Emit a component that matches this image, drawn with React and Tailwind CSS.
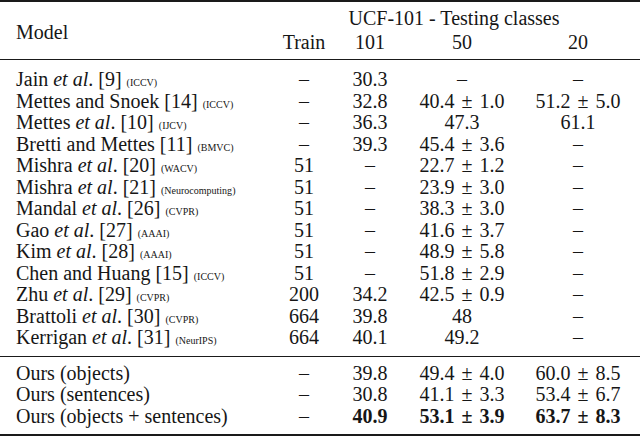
import React from "react";

const DASH = "–";

const baselines = [
  { author: "Jain", etal: true, ref: 9, venue: "ICCV", train: DASH, c101: "30.3", c50: DASH, c20: DASH },
  { author: "Mettes and Snoek", ref: 14, venue: "ICCV", train: DASH, c101: "32.8", c50: "40.4 ± 1.0", c20: "51.2 ± 5.0" },
  { author: "Mettes", etal: true, ref: 10, venue: "IJCV", train: DASH, c101: "36.3", c50: "47.3", c20: "61.1" },
  { author: "Bretti and Mettes", ref: 11, venue: "BMVC", train: DASH, c101: "39.3", c50: "45.4 ± 3.6", c20: DASH },
  { author: "Mishra", etal: true, ref: 20, venue: "WACV", train: "51", c101: DASH, c50: "22.7 ± 1.2", c20: DASH },
  { author: "Mishra", etal: true, ref: 21, venue: "Neurocomputing", train: "51", c101: DASH, c50: "23.9 ± 3.0", c20: DASH },
  { author: "Mandal", etal: true, ref: 26, venue: "CVPR", train: "51", c101: DASH, c50: "38.3 ± 3.0", c20: DASH },
  { author: "Gao", etal: true, ref: 27, venue: "AAAI", train: "51", c101: DASH, c50: "41.6 ± 3.7", c20: DASH },
  { author: "Kim", etal: true, ref: 28, venue: "AAAI", train: "51", c101: DASH, c50: "48.9 ± 5.8", c20: DASH },
  { author: "Chen and Huang", ref: 15, venue: "ICCV", train: "51", c101: DASH, c50: "51.8 ± 2.9", c20: DASH },
  { author: "Zhu", etal: true, ref: 29, venue: "CVPR", train: "200", c101: "34.2", c50: "42.5 ± 0.9", c20: DASH },
  { author: "Brattoli", etal: true, ref: 30, venue: "CVPR", train: "664", c101: "39.8", c50: "48", c20: DASH },
  { author: "Kerrigan", etal: true, ref: 31, venue: "NeurIPS", train: "664", c101: "40.1", c50: "49.2", c20: DASH },
];

const ours = [
  { name: "Ours (objects)", train: DASH, c101: "39.8", c50: "49.4 ± 4.0", c20: "60.0 ± 8.5" },
  { name: "Ours (sentences)", train: DASH, c101: "30.8", c50: "41.1 ± 3.3", c20: "53.4 ± 6.7" },
  { name: "Ours (objects + sentences)", train: DASH, c101: "40.9", c50: "53.1 ± 3.9", c20: "63.7 ± 8.3", best: true },
];

const ModelName = ({ row }) => (
  <>
    {row.author}
    {row.etal && (
      <>
        {" "}
        <i>et al</i>.
      </>
    )}{" "}
    [{row.ref}] <span className="text-[10px] leading-[0]">({row.venue})</span>
  </>
);

// mean ± std, with a little extra room round the sign as in the paper
const Value = ({ v }) => {
  const [mean, std] = v.split(" ± ");
  if (!std) return v;
  return (
    <>
      {mean} <span className="mx-[2px]">±</span> {std}
    </>
  );
};

const NumCells = ({ row }) => (
  <>
    <td className="text-center">{row.train}</td>
    <td className={`text-center ${row.best ? "font-bold" : ""}`}>
      <Value v={row.c101} />
    </td>
    <td className={`text-center ${row.best ? "font-bold" : ""}`}>
      <Value v={row.c50} />
    </td>
    <td className={`text-center ${row.best ? "font-bold" : ""}`}>
      <Value v={row.c20} />
    </td>
  </>
);

export default function App() {
  return (
    <div className="w-[640px] h-[437px] overflow-hidden bg-white text-[#161616] text-[20px] leading-[21.5px] font-['Liberation_Serif','Times_New_Roman',serif]">
      <table className="w-[640px] table-fixed border-collapse">
        <colgroup>
          <col className="w-[276px]" />
          <col className="w-[56px]" />
          <col className="w-[76px]" />
          <col className="w-[108px]" />
          <col className="w-[124px]" />
        </colgroup>
        <thead>
          <tr className="border-t-2 border-[#1a1a1a]">
            <th rowSpan={2} className="pl-4 text-left font-normal align-middle pt-[4px]">
              Model
            </th>
            <th colSpan={4} className="font-normal text-center pt-[6px] pr-[8px]">
              UCF-101 - Testing classes
            </th>
          </tr>
          <tr className="border-b border-[#1a1a1a]">
            <th className="font-normal text-center pt-[2px] pb-[6px]">Train</th>
            <th className="font-normal text-center pt-[2px] pb-[6px]">101</th>
            <th className="font-normal text-center pt-[2px] pb-[6px]">50</th>
            <th className="font-normal text-center pt-[2px] pb-[6px]">20</th>
          </tr>
        </thead>
        <tbody className="border-b border-[#1a1a1a]">
          {baselines.map((row, i) => (
            <tr
              key={i}
              className={i === 0 ? "[&>td]:pt-[9px]" : i === baselines.length - 1 ? "[&>td]:pb-[7px]" : ""}
            >
              <td className="pl-4 whitespace-nowrap">
                <ModelName row={row} />
              </td>
              <NumCells row={row} />
            </tr>
          ))}
        </tbody>
        <tbody className="border-b-2 border-[#1a1a1a]">
          {ours.map((row, i) => (
            <tr
              key={i}
              className={i === 0 ? "[&>td]:pt-[6px]" : i === ours.length - 1 ? "[&>td]:pb-[7px]" : ""}
            >
              <td className="pl-4 whitespace-nowrap">{row.name}</td>
              <NumCells row={row} />
            </tr>
          ))}
        </tbody>
      </table>
    </div>
  );
}
